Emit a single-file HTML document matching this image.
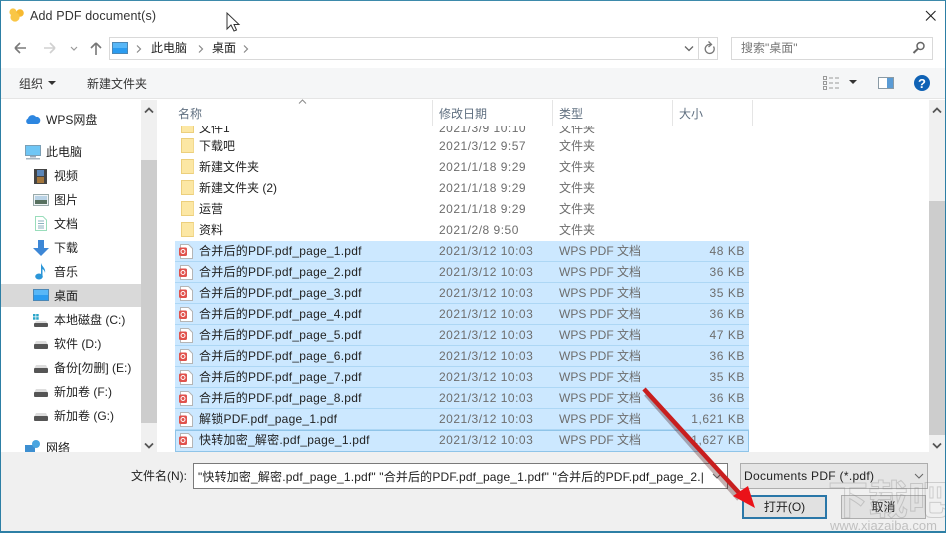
<!DOCTYPE html>
<html><head><meta charset="utf-8">
<style>
*{box-sizing:border-box;margin:0;padding:0}
html,body{width:946px;height:533px;overflow:hidden;background:#fff}
body{position:relative;font:12px/16px "Liberation Sans","Noto Sans CJK SC",sans-serif;color:#222}
.a{position:absolute;white-space:nowrap}
.g{color:#6d6d6d}
.d{letter-spacing:.5px;color:#6d6d6d}
.n{letter-spacing:.24px}
.z{letter-spacing:.55px;color:#6d6d6d}
.row{position:absolute;left:175px;width:574px;height:21px;background:#cce8ff;border-bottom:1px solid #add7f5}
.folder{position:absolute;left:181px;width:13px;height:15px;background:#fce7a4;border:1px solid #eccf7c;border-right-color:#f2d98e}
svg{position:absolute;overflow:visible}
</style></head><body>

<div class="a" style="left:0;top:0;width:946px;height:533px;border:1px solid #2d7fa5;border-top-color:#3d8aab;border-bottom:2px solid #2d7fa5;z-index:9;pointer-events:none"></div>

<!-- title -->
<svg style="left:9px;top:8px" width="16" height="15"><circle cx="4" cy="4" r="3.6" fill="#f9c646"/><circle cx="11" cy="5" r="3.8" fill="#f7b92f"/><circle cx="6" cy="9" r="4.6" fill="#f9c646"/></svg>
<div class="a" style="left:30px;top:8px;font-size:12.5px;color:#333;letter-spacing:.13px">Add PDF document(s)</div>
<svg style="left:226px;top:12px" width="14" height="20"><path d="M1 1V17L5 13L8 19L10.5 18L8 12.5H13Z" fill="#fff" stroke="#333" stroke-width="1"/></svg>
<svg style="left:925px;top:10px" width="12" height="12"><path d="M1 1L10.5 10.5M10.5 1L1 10.5" stroke="#222" stroke-width="1.1"/></svg>

<!-- nav -->
<svg style="left:14px;top:41px" width="100" height="16" fill="none">
<path d="M1 7H12M1 7L6 2M1 7L6 12" stroke="#7a7a7a" stroke-width="1.6"/>
<path d="M30 7H41M41 7L36 2M41 7L36 12" stroke="#d0d0d0" stroke-width="1.6"/>
<path d="M57 6L60 9L63 6" stroke="#9a9a9a" stroke-width="1.2"/>
<path d="M82 14V3M82 2L77 7M82 2L87 7" stroke="#777" stroke-width="1.6"/>
</svg>
<div class="a" style="left:109px;top:37px;width:609px;height:23px;border:1px solid #d9d9d9"></div>
<div class="a" style="left:698px;top:38px;width:1px;height:21px;background:#d9d9d9"></div>
<svg style="left:112px;top:42px" width="17" height="13"><rect x=".5" y=".5" width="15" height="11" fill="#2b9cf0" stroke="#4b87b5"/><rect x="1" y="1" width="14" height="5" fill="#58b7f7"/></svg>
<svg style="left:135px;top:44px" width="115" height="10" fill="none" stroke="#888" stroke-width="1.2"><path d="M2 1.500L5.500 5L2 8.500M64 1.500L67.500 5L64 8.500M109 1.500L112.500 5L109 8.500"/></svg>
<div class="a" style="left:151px;top:40px">此电脑</div>
<div class="a" style="left:212px;top:40px">桌面</div>
<svg style="left:684px;top:45px" width="11" height="8" fill="none"><path d="M1 1.500L5 5.500L9 1.500" stroke="#666" stroke-width="1.3"/></svg>
<svg style="left:703px;top:41px" width="13" height="15" fill="none"><path d="M10.500 5.500A4.500 4.500 0 1 1 6 3.500H8M5.500 .5L8.500 3.500L5.500 6" stroke="#777" stroke-width="1.3"/></svg>
<div class="a" style="left:731px;top:37px;width:202px;height:23px;border:1px solid #d9d9d9"></div>
<div class="a" style="left:741px;top:40px;color:#777">搜索"桌面"</div>
<svg style="left:912px;top:41px" width="14" height="14" fill="none" stroke="#666"><circle cx="8.500" cy="5" r="3.500" stroke-width="1.500"/><path d="M5.800 7.800L1.500 12" stroke-width="2"/></svg>

<!-- command bar -->
<div class="a" style="left:1px;top:68px;width:944px;height:31px;background:#f5f6f7;border-bottom:1px solid #e5e5e5"></div>
<div class="a" style="left:19px;top:76px;color:#333">组织</div>
<svg style="left:48px;top:81px" width="9" height="5"><path d="M0 0H8L4 4Z" fill="#333"/></svg>
<div class="a" style="left:87px;top:76px;color:#333">新建文件夹</div>
<svg style="left:823px;top:76px" width="17" height="14" fill="none" stroke="#999"><rect x=".5" y=".5" width="3" height="3"/><rect x=".5" y="5.500" width="3" height="3"/><rect x=".5" y="10.500" width="3" height="3"/><path d="M6 2H10M12 2H16M6 7H10M12 7H16M6 12H10M12 12H16"/></svg>
<svg style="left:849px;top:80px" width="9" height="5"><path d="M0 0H8L4 4Z" fill="#333"/></svg>
<svg style="left:878px;top:77px" width="16" height="12"><rect x=".5" y=".5" width="15" height="11" fill="#fff" stroke="#8a9aa5"/><rect x="9" y="1" width="6" height="10" fill="#5a9bd5"/></svg>
<svg style="left:914px;top:75px" width="17" height="17"><circle cx="8" cy="8" r="8" fill="#0f62b5"/><text x="8" y="13" font-size="13" font-weight="700" fill="#fff" text-anchor="middle" font-family="Liberation Sans">?</text></svg>

<!-- nav pane -->
<div class="a" style="left:1px;top:284px;width:140px;height:23px;background:#d9d9d9"></div>
<div class="a" style="left:141px;top:100px;width:16px;height:352px;background:#f0f0f0"></div>
<div class="a" style="left:141px;top:160px;width:16px;height:263px;background:#cdcdcd"></div>
<svg style="left:144px;top:107px" width="10" height="7" fill="none"><path d="M1 5.500L5 1.500L9 5.500" stroke="#555" stroke-width="1.800"/></svg>
<svg style="left:144px;top:442px" width="10" height="7" fill="none"><path d="M1 1.500L5 5.500L9 1.500" stroke="#555" stroke-width="1.800"/></svg>

<svg style="left:25px;top:113px" width="16" height="12"><path d="M3 11A3 3 0 0 1 3 5.500A4.500 4.500 0 0 1 11 4A3.500 3.500 0 0 1 12.500 11Z" fill="#2d86e0"/></svg>
<div class="a" style="left:46px;top:112px">WPS网盘</div>

<svg style="left:25px;top:145px" width="16" height="15"><rect x=".5" y=".5" width="15" height="10" fill="#6fc6f5" stroke="#7b9fb5"/><rect x="5" y="11" width="6" height="1.500" fill="#9ab"/><rect x="1" y="13" width="14" height="1.500" fill="#a5b5c0"/></svg>
<div class="a" style="left:46px;top:144px">此电脑</div>

<svg style="left:34px;top:169px" width="14" height="15"><rect width="13" height="15" fill="#444"/><rect x="3" y="1" width="7" height="6" fill="#5b86b8"/><rect x="3" y="8" width="7" height="6" fill="#a3763c"/></svg>
<div class="a" style="left:54px;top:168px">视频</div>
<svg style="left:33px;top:194px" width="16" height="12"><rect x=".5" y=".5" width="15" height="11" fill="#eef3f6" stroke="#9aa"/><rect x="2" y="2" width="12" height="4" fill="#b9d3e6"/><rect x="2" y="6" width="12" height="4" fill="#57705f"/></svg>
<div class="a" style="left:54px;top:192px">图片</div>
<svg style="left:35px;top:216px" width="12" height="15"><path d="M.5 .5H8L11.500 4V14.500H.5Z" fill="#fff" stroke="#9db"/><path d="M3 5H9M3 7.500H9M3 10H9M3 12H9" stroke="#69a" stroke-width=".8"/></svg>
<div class="a" style="left:54px;top:216px">文档</div>
<svg style="left:33px;top:240px" width="16" height="16"><path d="M5 0H11V8H16L8 16L0 8H5Z" fill="#3d87d6"/></svg>
<div class="a" style="left:54px;top:240px">下载</div>
<svg style="left:35px;top:263px" width="12" height="17"><ellipse cx="4" cy="13.500" rx="3.800" ry="3" fill="#2b96d8"/><path d="M6 13V0C7 4 11 5 10 10C9.500 7 8 6.500 7.500 6V13Z" fill="#2b96d8"/></svg>
<div class="a" style="left:54px;top:264px">音乐</div>
<svg style="left:33px;top:289px" width="16" height="13"><rect x=".5" y=".5" width="15" height="11" fill="#2b9cf0" stroke="#4b87b5"/><rect x="1" y="1" width="14" height="5" fill="#58b7f7"/></svg>
<div class="a" style="left:54px;top:288px">桌面</div>

<svg style="left:33px;top:314px" width="16" height="13"><rect width="2.500" height="2.500" fill="#2aa5c9"/><rect x="3.200" width="2.500" height="2.500" fill="#2aa5c9"/><rect y="3.200" width="2.500" height="2.500" fill="#2aa5c9"/><rect x="3.200" y="3.200" width="2.500" height="2.500" fill="#2aa5c9"/><path d="M3 7H13L15 10H1Z" fill="#ddd"/><rect x="1" y="9" width="14" height="4" rx="1" fill="#555"/></svg>
<div class="a" style="left:54px;top:312px">本地磁盘 (C:)</div>
<svg style="left:33px;top:341px" width="16" height="9"><path d="M3 0H13L15 4H1Z" fill="#ddd"/><rect x="1" y="3" width="14" height="5" rx="1" fill="#555"/></svg>
<div class="a" style="left:54px;top:336px">软件 (D:)</div>
<svg style="left:33px;top:365px" width="16" height="9"><path d="M3 0H13L15 4H1Z" fill="#ddd"/><rect x="1" y="3" width="14" height="5" rx="1" fill="#555"/></svg>
<div class="a" style="left:54px;top:360px">备份[勿删] (E:)</div>
<svg style="left:33px;top:389px" width="16" height="9"><path d="M3 0H13L15 4H1Z" fill="#ddd"/><rect x="1" y="3" width="14" height="5" rx="1" fill="#555"/></svg>
<div class="a" style="left:54px;top:384px">新加卷 (F:)</div>
<svg style="left:33px;top:413px" width="16" height="9"><path d="M3 0H13L15 4H1Z" fill="#ddd"/><rect x="1" y="3" width="14" height="5" rx="1" fill="#555"/></svg>
<div class="a" style="left:54px;top:408px">新加卷 (G:)</div>
<svg style="left:25px;top:440px" width="16" height="12"><rect x="0" y="5" width="10" height="7" fill="#3d8fd1"/><circle cx="11" cy="4" r="4" fill="#4aa5e0"/></svg>
<div class="a" style="left:46px;top:440px">网络</div>

<!-- file list -->
<div class="a" style="left:178px;top:106px;color:#5f6f80">名称</div>
<div class="a" style="left:439px;top:106px;color:#5f6f80">修改日期</div>
<div class="a" style="left:559px;top:106px;color:#5f6f80">类型</div>
<div class="a" style="left:679px;top:106px;color:#5f6f80">大小</div>
<div class="a" style="left:432px;top:100px;width:1px;height:26px;background:#e5e5e5"></div>
<div class="a" style="left:552px;top:100px;width:1px;height:26px;background:#e5e5e5"></div>
<div class="a" style="left:672px;top:100px;width:1px;height:26px;background:#e5e5e5"></div>
<div class="a" style="left:752px;top:100px;width:1px;height:26px;background:#e5e5e5"></div>
<svg style="left:298px;top:99px" width="10" height="6" fill="none"><path d="M1 4.500L4.500 1L8 4.500" stroke="#8a8a8a"/></svg>

<div class="a" style="left:929px;top:100px;width:16px;height:352px;background:#f0f0f0"></div>
<div class="a" style="left:929px;top:201px;width:16px;height:234px;background:#cdcdcd"></div>
<svg style="left:932px;top:107px" width="10" height="7" fill="none"><path d="M1 5.500L5 1.500L9 5.500" stroke="#555" stroke-width="1.800"/></svg>
<svg style="left:932px;top:442px" width="10" height="7" fill="none"><path d="M1 1.500L5 5.500L9 1.500" stroke="#555" stroke-width="1.800"/></svg>

<!-- clipped first row -->
<div class="a" style="left:175px;top:126px;width:574px;height:8px;overflow:hidden">
<div class="a" style="left:6px;top:-6px;width:13px;height:13px;background:#fce7a4;border:1px solid #eccf7c"></div>
<div class="a" style="left:24px;top:-6px">文件1</div>
<div class="a d" style="left:264px;top:-6px">2021/3/9 10:10</div>
<div class="a g" style="left:384px;top:-6px">文件夹</div>
</div>

<div class="folder" style="top:138px"></div><div class="a" style="left:199px;top:138px">下载吧</div><div class="a d" style="left:439px;top:138px">2021/3/12 9:57</div><div class="a g" style="left:559px;top:138px">文件夹</div>
<div class="folder" style="top:159px"></div><div class="a" style="left:199px;top:159px">新建文件夹</div><div class="a d" style="left:439px;top:159px">2021/1/18 9:29</div><div class="a g" style="left:559px;top:159px">文件夹</div>
<div class="folder" style="top:180px"></div><div class="a" style="left:199px;top:180px">新建文件夹 (2)</div><div class="a d" style="left:439px;top:180px">2021/1/18 9:29</div><div class="a g" style="left:559px;top:180px">文件夹</div>
<div class="folder" style="top:201px"></div><div class="a" style="left:199px;top:201px">运营</div><div class="a d" style="left:439px;top:201px">2021/1/18 9:29</div><div class="a g" style="left:559px;top:201px">文件夹</div>
<div class="folder" style="top:222px"></div><div class="a" style="left:199px;top:222px">资料</div><div class="a d" style="left:439px;top:222px">2021/2/8 9:50</div><div class="a g" style="left:559px;top:222px">文件夹</div>

<!-- PDF rows -->
<div class="row" style="top:241px"></div><div class="row" style="top:262px"></div><div class="row" style="top:283px"></div><div class="row" style="top:304px"></div><div class="row" style="top:325px"></div><div class="row" style="top:346px"></div><div class="row" style="top:367px"></div><div class="row" style="top:388px"></div><div class="row" style="top:409px"></div><div class="row" style="top:430px;height:22px;border:1px solid #8fc4e8"></div>

<svg style="left:178px;top:244px" width="16" height="200">
<defs><g id="p"><path d="M2.500 .5H10.500L14.500 4.500V14.500H2.500Z" fill="#fff" stroke="#b5b5b5"/><rect x="1" y="3.500" width="8" height="8.500" rx="1.500" fill="#e0524c"/><circle cx="5" cy="7.500" r="2" fill="none" stroke="#fff"/></g></defs>
<use href="#p"/><use href="#p" y="21"/><use href="#p" y="42"/><use href="#p" y="63"/><use href="#p" y="84"/><use href="#p" y="105"/><use href="#p" y="126"/><use href="#p" y="147"/><use href="#p" y="168"/><use href="#p" y="189"/>
</svg>

<div class="a n" style="left:199px;top:243px">合并后的PDF.pdf_page_1.pdf</div><div class="a d" style="left:439px;top:243px">2021/3/12 10:03</div><div class="a g" style="left:559px;top:243px">WPS PDF 文档</div><div class="a z" style="right:201px;top:243px">48 KB</div>
<div class="a n" style="left:199px;top:264px">合并后的PDF.pdf_page_2.pdf</div><div class="a d" style="left:439px;top:264px">2021/3/12 10:03</div><div class="a g" style="left:559px;top:264px">WPS PDF 文档</div><div class="a z" style="right:201px;top:264px">36 KB</div>
<div class="a n" style="left:199px;top:285px">合并后的PDF.pdf_page_3.pdf</div><div class="a d" style="left:439px;top:285px">2021/3/12 10:03</div><div class="a g" style="left:559px;top:285px">WPS PDF 文档</div><div class="a z" style="right:201px;top:285px">35 KB</div>
<div class="a n" style="left:199px;top:306px">合并后的PDF.pdf_page_4.pdf</div><div class="a d" style="left:439px;top:306px">2021/3/12 10:03</div><div class="a g" style="left:559px;top:306px">WPS PDF 文档</div><div class="a z" style="right:201px;top:306px">36 KB</div>
<div class="a n" style="left:199px;top:327px">合并后的PDF.pdf_page_5.pdf</div><div class="a d" style="left:439px;top:327px">2021/3/12 10:03</div><div class="a g" style="left:559px;top:327px">WPS PDF 文档</div><div class="a z" style="right:201px;top:327px">47 KB</div>
<div class="a n" style="left:199px;top:348px">合并后的PDF.pdf_page_6.pdf</div><div class="a d" style="left:439px;top:348px">2021/3/12 10:03</div><div class="a g" style="left:559px;top:348px">WPS PDF 文档</div><div class="a z" style="right:201px;top:348px">36 KB</div>
<div class="a n" style="left:199px;top:369px">合并后的PDF.pdf_page_7.pdf</div><div class="a d" style="left:439px;top:369px">2021/3/12 10:03</div><div class="a g" style="left:559px;top:369px">WPS PDF 文档</div><div class="a z" style="right:201px;top:369px">35 KB</div>
<div class="a n" style="left:199px;top:390px">合并后的PDF.pdf_page_8.pdf</div><div class="a d" style="left:439px;top:390px">2021/3/12 10:03</div><div class="a g" style="left:559px;top:390px">WPS PDF 文档</div><div class="a z" style="right:201px;top:390px">36 KB</div>
<div class="a n" style="left:199px;top:411px">解锁PDF.pdf_page_1.pdf</div><div class="a d" style="left:439px;top:411px">2021/3/12 10:03</div><div class="a g" style="left:559px;top:411px">WPS PDF 文档</div><div class="a z" style="right:201px;top:411px">1,621 KB</div>
<div class="a n" style="left:199px;top:432px">快转加密_解密.pdf_page_1.pdf</div><div class="a d" style="left:439px;top:432px">2021/3/12 10:03</div><div class="a g" style="left:559px;top:432px">WPS PDF 文档</div><div class="a z" style="right:201px;top:432px">1,627 KB</div>

<!-- footer -->
<div class="a" style="left:1px;top:452px;width:944px;height:79px;background:#f0f0f0"></div>
<div class="a" style="left:131px;top:468px">文件名(N):</div>
<div class="a" style="left:193px;top:463px;width:535px;height:26px;background:#fff;border:1px solid #7a7a7a;overflow:hidden"><div class="a" style="left:4px;top:5px;letter-spacing:.16px">"快转加密_解密.pdf_page_1.pdf" "合并后的PDF.pdf_page_1.pdf" "合并后的PDF.pdf_page_2.|</div></div>
<svg style="left:712px;top:473px" width="11" height="7" fill="none"><path d="M1 1L5 5L9 1" stroke="#666"/></svg>
<div class="a" style="left:740px;top:463px;width:188px;height:26px;background:#e5e5e5;border:1px solid #adadad"></div>
<div class="a" style="left:744px;top:468px;letter-spacing:.3px">Documents PDF (*.pdf)</div>
<svg style="left:914px;top:473px" width="11" height="7" fill="none"><path d="M1 1L5 5L9 1" stroke="#666"/></svg>
<div class="a" style="left:742px;top:495px;width:85px;height:24px;background:#e1e1e1;border:2px solid #2a77a8;text-align:center;line-height:20px">打开(O)</div>
<div class="a" style="left:841px;top:495px;width:85px;height:24px;background:#e1e1e1;border:1px solid #adadad;text-align:center;line-height:22px">取消</div>

<!-- watermark -->
<div class="a" style="left:828px;top:480px;font-size:40px;line-height:42px;color:transparent;-webkit-text-stroke:1px rgba(130,130,130,.32);font-weight:700;z-index:6">下载吧</div>
<div class="a" style="left:830px;top:519px;font-size:13px;line-height:13px;color:rgba(120,120,120,.4);z-index:6">www.xiazaiba.com</div>

<!-- arrow -->
<svg style="left:0;top:0;z-index:7" width="946" height="533">
<path d="M645 392L738 497" stroke="rgba(60,0,0,.3)" stroke-width="5" fill="none" transform="translate(1,2)"/>
<path d="M644 389L741 495" stroke="#c81e1e" stroke-width="4.500" fill="none"/>
<path d="M755 508L733 496L748 486Z" fill="#ea1219"/>
</svg>
</body></html>
